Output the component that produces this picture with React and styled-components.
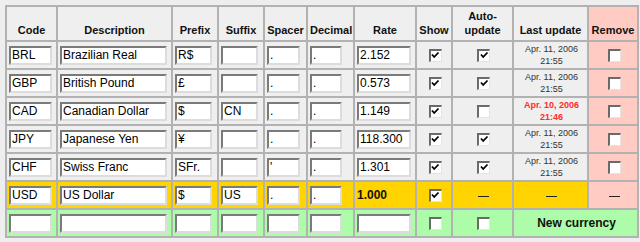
import React from "react";
import styled, { createGlobalStyle } from "styled-components";

const Global = createGlobalStyle`
  html, body { margin: 0; padding: 0; background: #eeeeee; }
  body { font-family: "Liberation Sans", Arial, sans-serif; }
`;

const Page = styled.div`
  padding: 5px 0 0 5px;
`;

const Table = styled.table`
  border-collapse: collapse;
  table-layout: fixed;
  width: 632px;
  background: #efefef;
`;

const Th = styled.th`
  border: 2px solid #b2b2b2;
  height: 30px;
  padding: 0 2px 3px;
  vertical-align: bottom;
  font: bold 11px/14px "Liberation Sans", Arial, sans-serif;
  color: #111;
  text-align: center;
  background: ${(p) => (p.$remove ? "#ffcbc2" : "#efefef")};
`;

const tones = {
  normal: "#efefef",
  remove: "#ffcbc2",
  base: "#ffd400",
  add: "#acfcaa",
};

const Td = styled.td`
  border: 2px solid #b2b2b2;
  height: 26px;
  padding: 0 0 0 2px;
  vertical-align: middle;
  text-align: ${(p) => (p.$center ? "center" : "left")};
  background: ${(p) => tones[p.$tone || "normal"]};
  font: 11px "Liberation Sans", Arial, sans-serif;
  color: #222;
`;

const Input = styled.input`
  box-sizing: border-box;
  width: ${(p) => p.$w}px;
  height: 19px;
  margin: 0;
  padding: 0 1px;
  background: #fff;
  border-style: solid;
  border-width: 2px;
  border-color: #7a7a7a #dcdcdc #dcdcdc #7a7a7a;
  font: 12px "Liberation Sans", Arial, sans-serif;
  color: #000;
  outline: none;
  display: block;
`;

const Box = styled.span`
  box-sizing: border-box;
  display: inline-flex;
  align-items: center;
  justify-content: center;
  width: 13px;
  height: 13px;
  background: #fff;
  border-style: solid;
  border-width: 2px 1px 1px 2px;
  border-color: #6a6a6a #e4e4e4 #e4e4e4 #6a6a6a;
  vertical-align: middle;
`;

const Stamp = styled.div`
  font: ${(p) => (p.$stale ? "bold" : "normal")} 9px/12px "Liberation Sans", Arial, sans-serif;
  color: ${(p) => (p.$stale ? "#ff2a2a" : "#333")};
  text-align: center;
`;

const Strong = styled.span`
  font: bold 12px "Liberation Sans", Arial, sans-serif;
  color: #111;
`;

const Dash = styled.span`
  display: inline-block;
  width: 11px;
  height: 1px;
  background: #222;
  vertical-align: middle;
`;

const AddLabel = styled.span`
  font: bold 12px "Liberation Sans", Arial, sans-serif;
  color: #111;
`;

function Check({ on }) {
  return (
    <Box>
      {on && (
        <svg width="9" height="9" viewBox="0 0 9 9">
          <polyline points="1,3.5 3.2,6 7.5,1.5" fill="none" stroke="#000" strokeWidth="1.8" />
        </svg>
      )}
    </Box>
  );
}

const widths = [51, 115, 46, 46, 43, 47, 62, 36, 61, 75, 50];
const inputW = [43, 107, 37, 37, 33, 32, 54];

const rows = [
  { code: "BRL", desc: "Brazilian Real", pre: "R$", suf: "", sp: ".", dec: ".", rate: "2.152", show: true, auto: true, date: "Apr. 11, 2006", time: "21:55" },
  { code: "GBP", desc: "British Pound", pre: "£", suf: "", sp: ".", dec: ".", rate: "0.573", show: true, auto: true, date: "Apr. 11, 2006", time: "21:55" },
  { code: "CAD", desc: "Canadian Dollar", pre: "$", suf: "CN", sp: ".", dec: ".", rate: "1.149", show: true, auto: false, date: "Apr. 10, 2006", time: "21:46", stale: true },
  { code: "JPY", desc: "Japanese Yen", pre: "¥", suf: "", sp: ".", dec: ".", rate: "118.300", show: true, auto: true, date: "Apr. 11, 2006", time: "21:55" },
  { code: "CHF", desc: "Swiss Franc", pre: "SFr.", suf: "", sp: "'", dec: ".", rate: "1.301", show: true, auto: true, date: "Apr. 11, 2006", time: "21:55" },
];

function Fields({ values, tone, skipRate }) {
  return values.map((v, i) =>
    skipRate && i === 6 ? null : (
      <Td key={i} $tone={tone}>
        <Input $w={inputW[i]} defaultValue={v} />
      </Td>
    )
  );
}

export default function App() {
  return (
    <>
      <Global />
      <Page>
        <Table>
          <colgroup>
            {widths.map((w, i) => (
              <col key={i} style={{ width: w }} />
            ))}
          </colgroup>
          <thead>
            <tr>
              <Th>Code</Th>
              <Th>Description</Th>
              <Th>Prefix</Th>
              <Th>Suffix</Th>
              <Th>Spacer</Th>
              <Th>Decimal</Th>
              <Th>Rate</Th>
              <Th>Show</Th>
              <Th>
                Auto-
                <br />
                update
              </Th>
              <Th>Last update</Th>
              <Th $remove>Remove</Th>
            </tr>
          </thead>
          <tbody>
            {rows.map((r) => (
              <tr key={r.code}>
                <Fields values={[r.code, r.desc, r.pre, r.suf, r.sp, r.dec, r.rate]} />
                <Td $center>
                  <Check on={r.show} />
                </Td>
                <Td $center>
                  <Check on={r.auto} />
                </Td>
                <Td $center>
                  <Stamp $stale={r.stale}>
                    {r.date}
                    <br />
                    {r.time}
                  </Stamp>
                </Td>
                <Td $center $tone="remove">
                  <Check on={false} />
                </Td>
              </tr>
            ))}
            <tr>
              <Fields values={["USD", "US Dollar", "$", "US", ".", ".", ""]} tone="base" skipRate />
              <Td $tone="base">
                <Strong>1.000</Strong>
              </Td>
              <Td $center $tone="base">
                <Check on />
              </Td>
              <Td $center $tone="base">
                <Dash />
              </Td>
              <Td $center $tone="base">
                <Dash />
              </Td>
              <Td $center $tone="remove">
                <Dash />
              </Td>
            </tr>
            <tr>
              <Fields values={["", "", "", "", "", "", ""]} tone="add" />
              <Td $center $tone="add">
                <Check on={false} />
              </Td>
              <Td $center $tone="add">
                <Check on={false} />
              </Td>
              <Td $center $tone="add" colSpan={2}>
                <AddLabel>New currency</AddLabel>
              </Td>
            </tr>
          </tbody>
        </Table>
      </Page>
    </>
  );
}
